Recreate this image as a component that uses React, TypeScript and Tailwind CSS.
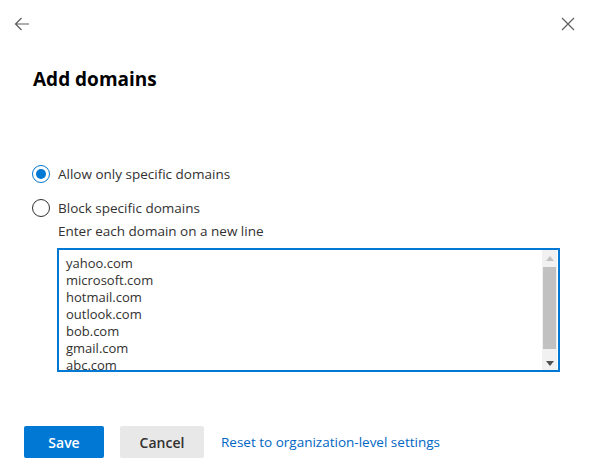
import React from "react";

const domains = [
  "yahoo.com",
  "microsoft.com",
  "hotmail.com",
  "outlook.com",
  "bob.com",
  "gmail.com",
  "abc.com",
];

function Radio({ checked, label }: { checked?: boolean; label: string }) {
  return (
    <div className="flex items-center gap-[8px] h-[20px]">
      <span
        className={
          "flex items-center justify-center w-[18px] h-[18px] rounded-full border " +
          (checked ? "border-[#0078d4]" : "border-[#323130]")
        }
      >
        {checked && <span className="w-[10px] h-[10px] rounded-full bg-[#0078d4]" />}
      </span>
      <span className="text-[13.5px] text-[#323130]">{label}</span>
    </div>
  );
}

export default function App() {
  return (
    <div
      className="w-[590px] h-[469px] bg-white relative overflow-hidden"
      style={{ fontFamily: '"Segoe UI", "Open Sans", sans-serif' }}
    >
      {/* header icons */}
      <div className="flex justify-between items-center pl-[14px] pr-[15px] pt-[15px] h-[33px]">
        <svg width="16" height="14" viewBox="0 0 16 14" fill="none" stroke="#605e5c" strokeWidth="1.2">
          <path d="M15 7H1.5M7.5 1L1.5 7l6 6" />
        </svg>
        <svg width="14" height="14" viewBox="0 0 14 14" fill="none" stroke="#605e5c" strokeWidth="1.2">
          <path d="M1 1l12 12M13 1L1 13" />
        </svg>
      </div>

      <h1 className="pl-[33px] mt-[32px] text-[19px] font-bold text-black leading-[28px]">Add domains</h1>

      <div className="pl-[32px] mt-[71px] flex flex-col gap-[14px]">
        <Radio checked label="Allow only specific domains" />
        <Radio label="Block specific domains" />
      </div>

      <div className="pl-[58px] mt-[3px] text-[13.5px] text-[#323130] leading-[20px]">
        Enter each domain on a new line
      </div>

      <div className="ml-[57px] mt-[7px] w-[503px] h-[124px] border-2 border-[#0078d4] flex">
        <div className="flex-1 pl-[7px] pt-[5px] overflow-hidden text-[13px] leading-[17px] text-[#323130]">
          {domains.map((d) => (
            <div key={d}>{d}</div>
          ))}
        </div>
        <div className="w-[15px] mr-[1px] bg-[#f1f1f1] flex flex-col items-center">
          <div className="h-[17px] flex items-center justify-center">
            <svg width="8" height="5" viewBox="0 0 8 5">
              <path d="M0 5L4 0l4 5z" fill="#c1c1c1" />
            </svg>
          </div>
          <div className="w-[13px] h-[82px] bg-[#c1c1c1]" />
          <div className="flex-1 flex items-end justify-center pb-[4px]">
            <svg width="8" height="5" viewBox="0 0 8 5">
              <path d="M0 0h8L4 5z" fill="#505050" />
            </svg>
          </div>
        </div>
      </div>

      <div className="pl-[24px] mt-[54px] flex items-center">
        <button className="w-[80px] h-[32px] rounded-[2px] bg-[#0078d4] text-white text-[14px] font-semibold">
          Save
        </button>
        <button className="ml-[16px] w-[84px] h-[32px] rounded-[2px] bg-[#e8e8e8] text-[#323130] text-[14px] font-semibold">
          Cancel
        </button>
        <span className="ml-[17px] text-[13.5px] text-[#0066c4]">Reset to organization-level settings</span>
      </div>
    </div>
  );
}
